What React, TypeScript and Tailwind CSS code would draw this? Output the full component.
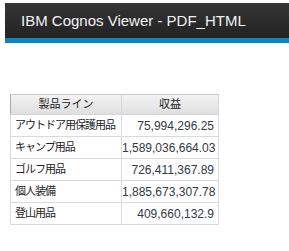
const ROWS = [
  { name: "アウトドア用保護用品", value: "75,994,296.25" },
  { name: "キャンプ用品", value: "1,589,036,664.03" },
  { name: "ゴルフ用品", value: "726,411,367.89" },
  { name: "個人装備", value: "1,885,673,307.78" },
  { name: "登山用品", value: "409,660,132.9" },
];

export default function App() {
  return (
    <div className="w-[289px] h-[251px] bg-white pt-[3px] pl-[5px] font-['Liberation_Sans','Noto_Sans_CJK_JP',sans-serif]">
      {/* Title bar */}
      <div className="h-[35px] bg-gradient-to-b from-[#353535] to-[#232323] pl-4 flex items-center">
        <span className="text-[15px] text-[#f2f2f2] leading-none">IBM Cognos Viewer - PDF_HTML</span>
      </div>
      <div className="h-[5px] bg-[#0a84c2]" />

      {/* Report table */}
      <div className="pt-[51px] pl-[5px]">
        <table className="table-fixed w-[208px] border-collapse text-[12px] text-[#222] leading-none">
          <thead>
            <tr className="h-[20px] bg-gradient-to-b from-[#f3f3f3] to-[#dedede]">
              <th className="w-[111px] border border-[#d6d6d6] border-l-[#a9a9a9] border-t-[#c9c9c9] font-normal text-center text-[11px]">
                製品ライン
              </th>
              <th className="w-[97px] border border-[#d6d6d6] border-t-[#c9c9c9] font-normal text-center text-[11px]">
                収益
              </th>
            </tr>
          </thead>
          <tbody>
            {ROWS.map((r) => (
              <tr key={r.name} className="h-[22px]">
                <td className="border border-[#dadada] pl-[4px] text-left whitespace-nowrap text-[11px] tracking-[-1px]">
                  {r.name}
                </td>
                <td className="border border-[#dadada] pr-[4px] text-right whitespace-nowrap text-[#333a44]">
                  {r.value}
                </td>
              </tr>
            ))}
          </tbody>
        </table>
      </div>
    </div>
  );
}
